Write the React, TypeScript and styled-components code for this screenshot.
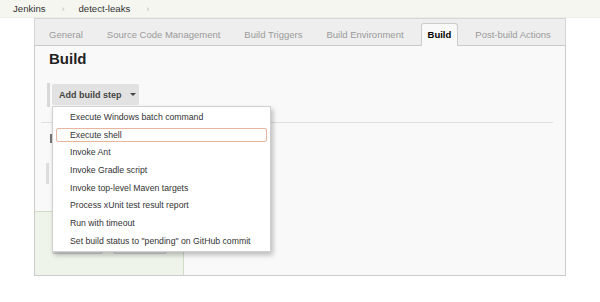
import React from "react";
import styled, { createGlobalStyle } from "styled-components";

const GlobalStyle = createGlobalStyle`
  html, body {
    margin: 0;
    padding: 0;
    background: #ffffff;
    font-family: "Liberation Sans", Arial, Helvetica, sans-serif;
    color: #333333;
  }
  * { box-sizing: border-box; }
`;

const Breadcrumbs = styled.div`
  height: 18px;
  display: flex;
  align-items: center;
  padding-left: 13px;
  background: #f5f6f0;
  border-bottom: 1px solid #eceee6;
  font-size: 9.6px;
`;

const Crumb = styled.span`
  color: #333333;
`;

const Chevron = styled.span`
  color: #bbbbbb;
  font-size: 9px;
  margin: 0 14px 0 16px;
`;

const Main = styled.div`
  margin-left: 34px;
  width: 532px;
`;

const TabBar = styled.div`
  height: 28px;
  display: flex;
  align-items: flex-end;
  padding-left: 2px;
  background: #eeeeee;
  border: 1px solid #d6d6d6;
  border-bottom-color: #c9c9c9;
`;

const Tab = styled.div<{ $active?: boolean }>`
  height: 23px;
  line-height: 22px;
  margin: 0 5px -1px;
  padding: 0 6px;
  font-size: 9.5px;
  white-space: nowrap;
  border: 1px solid ${(p) => (p.$active ? "#cccccc" : "transparent")};
  border-bottom: none;
  border-radius: 3px 3px 0 0;
  background: ${(p) => (p.$active ? "#f9f9f9" : "transparent")};
  color: ${(p) => (p.$active ? "#000000" : "#9a9a9a")};
  font-weight: ${(p) => (p.$active ? "bold" : "normal")};
`;

const Panel = styled.div`
  height: 230px;
  display: flex;
  flex-direction: column;
  background: #f9f9f9;
  border: 1px solid #cccccc;
  border-top: none;
`;

const Title = styled.h1`
  margin: 4px 0 0 14px;
  font-size: 15px;
  line-height: 18px;
  font-weight: bold;
  color: #222222;
`;

const StepRow = styled.div`
  margin: 15px 0 0 12px;
  height: 24px;
  padding: 1px 0 0 2px;
  border-left: 3px solid #d8d8d8;
  align-self: flex-start;
`;

const DropWrap = styled.div`
  position: relative;
`;

const StepButton = styled.div`
  height: 21px;
  width: 87px;
  display: flex;
  align-items: center;
  gap: 8px;
  padding-left: 7px;
  background: #e2e2e2;
  border-radius: 2px;
  font-size: 9px;
  font-weight: bold;
  color: #444444;
`;

const Menu = styled.div`
  position: absolute;
  top: 22px;
  left: 0;
  width: 219px;
  z-index: 5;
  display: flex;
  flex-direction: column;
  gap: 3.7px;
  padding: 3px 0 3px;
  background: #ffffff;
  border: 1px solid #d0d0d0;
  box-shadow: 2px 3px 5px rgba(0, 0, 0, 0.25);
`;

const MenuItem = styled.div<{ $selected?: boolean }>`
  height: 14px;
  line-height: 12px;
  margin: 0 3px;
  padding-left: 13px;
  font-size: 8.7px;
  color: #333333;
  white-space: nowrap;
  border: 1px solid ${(p) => (p.$selected ? "#e6b79e" : "transparent")};
  border-radius: 2px;
`;

const Divider = styled.div`
  margin: 15px 12px 0 6px;
  height: 1px;
  background: #e0e0e0;
`;

const Mark = styled.div`
  margin: 11px 0 0 15px;
  width: 2px;
  height: 9px;
  background: #777777;
`;

const Handle = styled.div`
  margin: 20px 0 0 11px;
  width: 3px;
  height: 21px;
  background: #dddddd;
`;

const BottomBar = styled.div`
  margin-top: auto;
  width: 149px;
  height: 64px;
  display: flex;
  gap: 10px;
  padding: 21px 0 0 17px;
  background: #eef4ea;
  border-top: 1px solid #cfdcc8;
  border-right: 1px solid #cfdcc8;
`;

const FormButton = styled.div<{ $w: number }>`
  width: ${(p) => p.$w}px;
  height: 21px;
  background: #e4e4e4;
  border: 1px solid #cccccc;
  border-radius: 2px;
`;

const Caret = () => (
  <svg width="6" height="3" viewBox="0 0 6 3">
    <path d="M0 0 L6 0 L3 3 Z" fill="#444" />
  </svg>
);

const tabs = [
  "General",
  "Source Code Management",
  "Build Triggers",
  "Build Environment",
  "Build",
  "Post-build Actions",
];

const steps = [
  "Execute Windows batch command",
  "Execute shell",
  "Invoke Ant",
  "Invoke Gradle script",
  "Invoke top-level Maven targets",
  "Process xUnit test result report",
  "Run with timeout",
  'Set build status to "pending" on GitHub commit',
];

const App = () => {
  return (
    <>
      <GlobalStyle />
      <Breadcrumbs>
        <Crumb>Jenkins</Crumb>
        <Chevron>›</Chevron>
        <Crumb>detect-leaks</Crumb>
        <Chevron>›</Chevron>
      </Breadcrumbs>
      <Main>
        <TabBar>
          {tabs.map((t) => (
            <Tab key={t} $active={t === "Build"}>
              {t}
            </Tab>
          ))}
        </TabBar>
        <Panel>
          <Title>Build</Title>
          <StepRow>
            <DropWrap>
              <StepButton>
                Add build step <Caret />
              </StepButton>
              <Menu>
                {steps.map((s) => (
                  <MenuItem key={s} $selected={s === "Execute shell"}>
                    {s}
                  </MenuItem>
                ))}
              </Menu>
            </DropWrap>
          </StepRow>
          <Divider />
          <Mark />
          <Handle />
          <BottomBar>
            {/* Save / Apply, hidden under the open menu */}
            <FormButton $w={51} />
            <FormButton $w={54} />
          </BottomBar>
        </Panel>
      </Main>
    </>
  );
};

export default App;
